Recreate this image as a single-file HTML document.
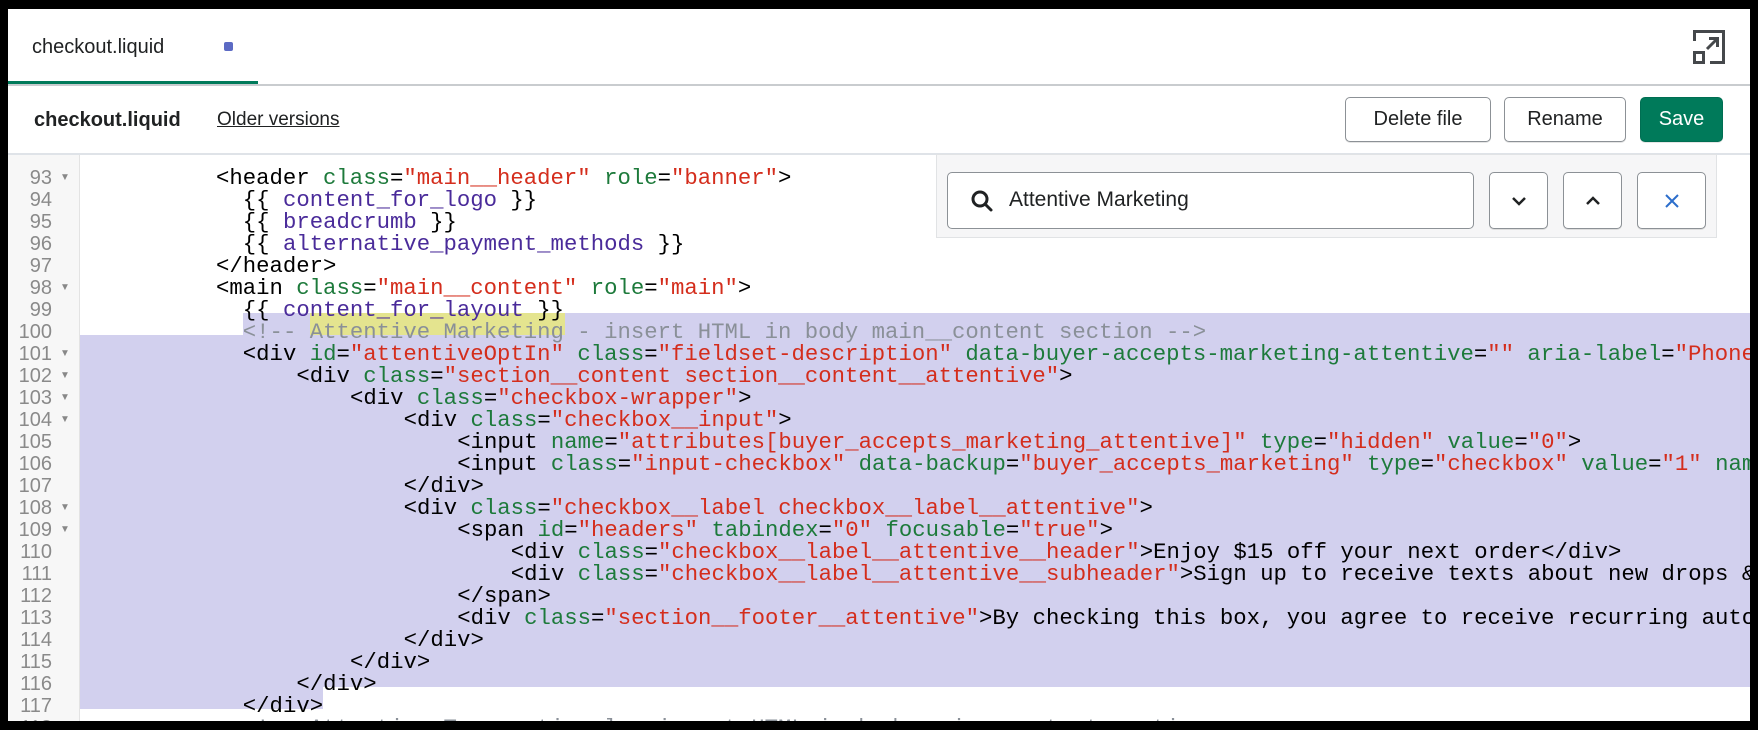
<!DOCTYPE html>
<html><head><meta charset="utf-8"><style>
*{margin:0;padding:0;box-sizing:border-box}
body{width:1758px;height:730px;background:#000;position:relative;overflow:hidden;font-family:"Liberation Sans",sans-serif}
#page{position:absolute;left:8px;top:9px;width:1742px;height:712px;background:#fff;overflow:hidden}
.abs{position:absolute}
.btn{position:absolute;border:1px solid #8c9196;border-radius:5px;background:#fff;font-size:20px;color:#202223;display:flex;align-items:center;justify-content:center;box-shadow:0 1px 0 rgba(0,0,0,.1)}
.code{position:absolute;left:0;top:146px;width:1742px;height:570px;overflow:hidden}
.ln{position:absolute;left:0;height:22px;line-height:22px;font-family:"Liberation Mono",monospace;font-size:22.3px;white-space:pre;color:#000}
.num{position:absolute;left:0;width:44px;text-align:right;height:22px;line-height:22px;font-family:"Liberation Sans",sans-serif;font-size:20px;color:#8a8a8a}
.fold{position:absolute;left:52px;font-size:10px;color:#888;line-height:22px}
.a{color:#1d7a3b}.s{color:#d42d1c}.p{color:#4a2b9a}.c{color:#8a9098}
</style></head><body><div id="page">
<div class="abs" style="left:24px;top:27px;font-size:20px;color:#202223">checkout.liquid</div>
<div class="abs" style="left:216px;top:33px;width:9px;height:9px;background:#5c6ac4;border-radius:2px"></div>
<div class="abs" style="left:0;top:75px;width:1742px;height:2px;background:#c9cccf"></div>
<div class="abs" style="left:0;top:72px;width:250px;height:3px;background:#007a5a"></div>
<svg class="abs" style="left:1685px;top:21px" width="32" height="34" viewBox="0 0 32 34" fill="none" stroke="#45484b" stroke-width="3"><path d="M1.5 11V1.5h29v31H17"/><rect x="1.5" y="22.5" width="9" height="10"/><path d="M14 19L24 9M16 8.5h8.5V17"/></svg>
<div class="abs" style="left:26px;top:100px;font-size:20px;font-weight:bold;color:#202223">checkout.liquid</div>
<div class="abs" style="left:209px;top:100px;font-size:19px;color:#202223;text-decoration:underline">Older versions</div>
<div class="btn" style="left:1337px;top:88px;width:146px;height:45px">Delete file</div>
<div class="btn" style="left:1496px;top:88px;width:122px;height:45px">Rename</div>
<div class="btn" style="left:1632px;top:88px;width:83px;height:45px;background:#007a5a;border-color:#006e52;color:#fff">Save</div>
<div class="abs" style="left:0;top:144px;width:1742px;height:2px;background:#dfe3e8"></div>
<div class="code">
<div class="abs" style="left:0;top:0;width:72px;height:570px;background:#f7f7f7;border-right:1px solid #e3e3e3"></div>
<div class="abs" style="left:235px;top:158px;width:1507px;height:22px;background:#d2d0ee"></div>
<div class="abs" style="left:72px;top:180px;width:1670px;height:352px;background:#d2d0ee"></div>
<div class="abs" style="left:72px;top:532px;width:243px;height:22px;background:#d2d0ee"></div>
<div class="abs" style="left:302px;top:158px;width:255px;height:22px;background:#e4e48f"></div>
<div id="lines"></div>
</div>
<div class="abs" style="left:928px;top:145px;width:781px;height:84px;background:#f6f6f7;border:1px solid #e1e3e5"></div>
<div class="abs" style="left:939px;top:163px;width:527px;height:57px;background:#fff;border:1px solid #8c9196;border-radius:5px"></div>
<svg class="abs" style="left:962px;top:180px" width="24" height="24" viewBox="0 0 24 24" fill="none" stroke="#202223" stroke-width="3"><circle cx="10" cy="10" r="7"/><path d="M15 15l6 6" stroke-linecap="round"/></svg>
<div class="abs" style="left:1001px;top:179px;font-size:21px;color:#202223">Attentive Marketing</div>
<div class="btn" style="left:1481px;top:163px;width:59px;height:57px"><svg width="16" height="10" viewBox="0 0 16 10"><path d="M2 2l6 6 6-6" fill="none" stroke="#202223" stroke-width="2.5"/></svg></div>
<div class="btn" style="left:1555px;top:163px;width:59px;height:57px"><svg width="16" height="10" viewBox="0 0 16 10"><path d="M2 8l6-6 6 6" fill="none" stroke="#202223" stroke-width="2.5"/></svg></div>
<div class="btn" style="left:1629px;top:163px;width:69px;height:57px"><svg width="16" height="16" viewBox="0 0 16 16"><path d="M2 2l12 12M14 2L2 14" fill="none" stroke="#2c6ecb" stroke-width="2"/></svg></div>
</div>
<script>
const L=[
[93,10,'&lt;header <span class="a">class</span>=<span class="s">"main__header"</span> <span class="a">role</span>=<span class="s">"banner"</span>&gt;',1],
[94,12,'{{ <span class="p">content_for_logo</span> }}',0],
[95,12,'{{ <span class="p">breadcrumb</span> }}',0],
[96,12,'{{ <span class="p">alternative_payment_methods</span> }}',0],
[97,10,'&lt;/header&gt;',0],
[98,10,'&lt;main <span class="a">class</span>=<span class="s">"main__content"</span> <span class="a">role</span>=<span class="s">"main"</span>&gt;',1],
[99,12,'{{ <span class="p">content_for_layout</span> }}',0],
[100,12,'<span class="c">&lt;!-- Attentive Marketing - insert HTML in body main__content section --&gt;</span>',0],
[101,12,'&lt;div <span class="a">id</span>=<span class="s">"attentiveOptIn"</span> <span class="a">class</span>=<span class="s">"fieldset-description"</span> <span class="a">data-buyer-accepts-marketing-attentive</span>=<span class="s">""</span> <span class="a">aria-label</span>=<span class="s">"Phone number"</span>&gt;',1],
[102,16,'&lt;div <span class="a">class</span>=<span class="s">"section__content section__content__attentive"</span>&gt;',1],
[103,20,'&lt;div <span class="a">class</span>=<span class="s">"checkbox-wrapper"</span>&gt;',1],
[104,24,'&lt;div <span class="a">class</span>=<span class="s">"checkbox__input"</span>&gt;',1],
[105,28,'&lt;input <span class="a">name</span>=<span class="s">"attributes[buyer_accepts_marketing_attentive]"</span> <span class="a">type</span>=<span class="s">"hidden"</span> <span class="a">value</span>=<span class="s">"0"</span>&gt;',0],
[106,28,'&lt;input <span class="a">class</span>=<span class="s">"input-checkbox"</span> <span class="a">data-backup</span>=<span class="s">"buyer_accepts_marketing"</span> <span class="a">type</span>=<span class="s">"checkbox"</span> <span class="a">value</span>=<span class="s">"1"</span> <span class="a">name</span>=<span class="s">"x"</span>&gt;',0],
[107,24,'&lt;/div&gt;',0],
[108,24,'&lt;div <span class="a">class</span>=<span class="s">"checkbox__label checkbox__label__attentive"</span>&gt;',1],
[109,28,'&lt;span <span class="a">id</span>=<span class="s">"headers"</span> <span class="a">tabindex</span>=<span class="s">"0"</span> <span class="a">focusable</span>=<span class="s">"true"</span>&gt;',1],
[110,32,'&lt;div <span class="a">class</span>=<span class="s">"checkbox__label__attentive__header"</span>&gt;Enjoy $15 off your next order&lt;/div&gt;',0],
[111,32,'&lt;div <span class="a">class</span>=<span class="s">"checkbox__label__attentive__subheader"</span>&gt;Sign up to receive texts about new drops &amp; more&lt;/div&gt;',0],
[112,28,'&lt;/span&gt;',0],
[113,28,'&lt;div <span class="a">class</span>=<span class="s">"section__footer__attentive"</span>&gt;By checking this box, you agree to receive recurring automated marketing texts',0],
[114,24,'&lt;/div&gt;',0],
[115,20,'&lt;/div&gt;',0],
[116,16,'&lt;/div&gt;',0],
[117,12,'&lt;/div&gt;',0],
[118,12,'<span class="c">&lt;!-- Attentive Transactional - insert HTML in body main__content section --&gt;</span>',0]];
let h='';
for(const [n,ind,t,f] of L){const top=(n-93)*22+12;
h+=`<div class="num" style="top:${top}px">${n}</div>`;
if(f)h+=`<div class="fold" style="top:${top}px">&#9660;</div>`;
h+=`<div class="ln" style="top:${top}px;left:${74+ind*13.4}px">${t}</div>`;}
document.getElementById('lines').innerHTML=h;
</script>
</body></html>
